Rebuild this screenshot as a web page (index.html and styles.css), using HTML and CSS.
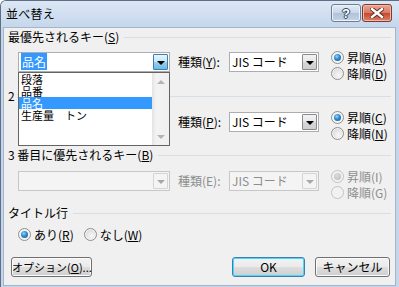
FILE: index.html
```html
<!DOCTYPE html>
<html lang="ja">
<head>
  <meta charset="UTF-8" />
  <title>並べ替え</title>
  <link rel="stylesheet" href="styles.css">
</head>
<body>
  <div class="window">
    <div class="titlebar">
      <span class="title">並べ替え</span>
      <div class="caption-buttons">
        <div class="cap-btn help">?</div>
        <div class="cap-btn close">
          <svg width="14" height="10" viewBox="0 0 14 10">
            <path d="M2 1 L12 9 M12 1 L2 9" stroke="#5b2a20" stroke-width="4.2" stroke-linecap="square"/>
            <path d="M2 1 L12 9 M12 1 L2 9" stroke="#fff" stroke-width="2.4" stroke-linecap="square"/>
          </svg>
        </div>
      </div>
    </div>

    <div class="client">
      <!-- 最優先されるキー -->
      <div class="group-head head-1"><span>最優先されるキー(<u>S</u>)</span><i class="rule"></i></div>
      <div class="key-row row-1">
        <div class="combo key-combo">
          <div class="combo-text"><span class="sel">品名</span></div>
          <div class="combo-btn hot"><b class="arrow"></b></div>
          <div class="droplist">
            <ul>
              <li>段落</li>
              <li>品番</li>
              <li class="selected">品名</li>
              <li>生産量　トン</li>
            </ul>
            <div class="scrollbar"><b class="up"></b><b class="down"></b></div>
          </div>
        </div>
        <span class="type-label">種類(<u>Y</u>):</span>
        <div class="combo type-combo">
          <div class="combo-text">JIS コード</div>
          <div class="combo-btn"><b class="arrow"></b></div>
        </div>
        <div class="order">
          <div class="radio checked"><i></i>昇順(<u>A</u>)</div>
          <div class="radio"><i></i>降順(<u>D</u>)</div>
        </div>
      </div>

      <!-- 2 番目 -->
      <div class="group-head head-2"><span>2 番目に優先されるキー(<u>T</u>)</span><i class="rule"></i></div>
      <div class="key-row row-2">
        <div class="combo key-combo">
          <div class="combo-text"></div>
          <div class="combo-btn"><b class="arrow"></b></div>
        </div>
        <span class="type-label">種類(<u>P</u>):</span>
        <div class="combo type-combo">
          <div class="combo-text">JIS コード</div>
          <div class="combo-btn"><b class="arrow"></b></div>
        </div>
        <div class="order">
          <div class="radio checked"><i></i>昇順(<u>C</u>)</div>
          <div class="radio"><i></i>降順(<u>N</u>)</div>
        </div>
      </div>

      <!-- 3 番目 (無効) -->
      <div class="group-head head-3"><span>3 番目に優先されるキー(<u>B</u>)</span><i class="rule"></i></div>
      <div class="key-row row-3 disabled">
        <div class="combo key-combo">
          <div class="combo-text"></div>
          <div class="combo-btn"><b class="arrow"></b></div>
        </div>
        <span class="type-label">種類(E):</span>
        <div class="combo type-combo">
          <div class="combo-text">JIS コード</div>
          <div class="combo-btn"><b class="arrow"></b></div>
        </div>
        <div class="order">
          <div class="radio checked"><i></i>昇順(I)</div>
          <div class="radio"><i></i>降順(G)</div>
        </div>
      </div>

      <!-- タイトル行 -->
      <div class="group-head head-4"><span>タイトル行</span><i class="rule"></i></div>
      <div class="title-opts">
        <div class="radio checked"><i></i>あり(<u>R</u>)</div>
        <div class="radio"><i></i>なし(<u>W</u>)</div>
      </div>

      <div class="buttons">
        <div class="btn btn-option">オプション(<u>O</u>)...</div>
        <div class="btn btn-ok default">OK</div>
        <div class="btn btn-cancel">キャンセル</div>
      </div>
    </div>
  </div>
</body>
</html>
```

FILE: styles.css
```css
* {
  box-sizing: border-box;
}
body {
  margin: 0;
  background: #fff;
  color: #000;
  font-family: "Noto Sans CJK JP", "Liberation Sans", sans-serif;
  font-size: 12px;
}
u {
  text-decoration: underline;
  text-underline-offset: 1px;
}

/* --- ウィンドウ枠 --- */
.window {
  width: 399px;
  height: 287px;
  background: #c5d6eb;
  border-top: 1px solid #5e6e84;
  border-left: 1px solid #5e6e84;
  border-top-left-radius: 6px;
  padding-bottom: 1px;
  display: flex;
  flex-direction: column;
  overflow: hidden;
}
.titlebar {
  height: 26px;
  flex-shrink: 0;
  display: flex;
  align-items: flex-start;
  background: linear-gradient(#dce7f5, #c6d7ec);
}
.title {
  padding: 6px 0 0 5px;
  line-height: 14px;
  letter-spacing: 0.02em;
}
.caption-buttons {
  margin: 3px 7px 0 auto;
  display: flex;
  gap: 1px;
}
.cap-btn {
  width: 30px;
  height: 18px;
  border-radius: 3px;
  display: flex;
  align-items: center;
  justify-content: center;
}
.help {
  border: 1px solid #6c7d95;
  background: linear-gradient(#e3ebf6 0%, #c8d7ea 48%, #b1c3da 52%, #c3d3e7 100%);
  box-shadow: inset 0 0 0 1px #eef3fa;
  color: #fff;
  font-family: "Liberation Sans", sans-serif;
  font-weight: bold;
  font-size: 13px;
  text-shadow: 0 0 1px #3a4a60, 0 0 1px #3a4a60, 1px 0 0 #3a4a60, -1px 0 0 #3a4a60, 0 1px 0 #3a4a60, 0 -1px 0 #3a4a60;
}
.close {
  border: 1px solid #7d3b2e;
  background: linear-gradient(#e9a696 0%, #d87a64 48%, #c6492f 52%, #d8826a 100%);
  box-shadow: inset 0 0 0 1px #f1b9ab;
}

/* --- クライアント領域 --- */
.client {
  height: 259px;
  margin: 0 3px 0 2px;
  border: 1px solid #a3b5cb;
  background: #f0f0f0;
  padding: 2px 4px 0 4px;
  display: flex;
  flex-direction: column;
}
.group-head {
  height: 14px;
  line-height: 14px;
  display: flex;
  align-items: center;
  white-space: nowrap;
}
.group-head .rule {
  flex: 1;
  height: 1px;
  background: #d5dfe5;
  margin-left: 5px;
}
.head-2 { margin-top: 8px; }
.head-3 { margin-top: 7px; }
.head-4 { margin-top: 6px; }

.key-row {
  height: 32px;
  margin-top: 6px;
  margin-left: 10px;
  display: flex;
  align-items: flex-start;
}
.row-1 { margin-top: 5px; }

/* コンボボックス */
.combo {
  position: relative;
  height: 20px;
  margin-top: 3px;
  border: 1px solid #abadb3;
  background: #fff;
  display: flex;
}
.key-combo { width: 152px; }
.type-combo { width: 90px; }
.combo-text {
  flex: 1;
  padding-left: 2px;
  line-height: 18px;
  white-space: nowrap;
  overflow: hidden;
}
.combo-text .sel {
  background: #3399ff;
  color: #fff;
  padding: 0 1px;
}
.combo-btn {
  width: 15px;
  margin: 1px 1px 1px 0;
  border: 1px solid #8a8a8a;
  border-radius: 1px;
  background: linear-gradient(#f3f3f3 0%, #e6e6e6 50%, #d6d6d6 51%, #cfcfcf 100%);
  display: flex;
  align-items: center;
  justify-content: center;
}
.combo-btn.hot {
  border-color: #3c7fb1;
  background: linear-gradient(#e8f5fc 0%, #c4e5f6 50%, #98d1ef 51%, #6fbae4 100%);
}
.arrow {
  width: 0;
  height: 0;
  border-left: 4px solid transparent;
  border-right: 4px solid transparent;
  border-top: 4px solid #000;
  margin-top: 1px;
}

/* ドロップダウンリスト */
.droplist {
  position: absolute;
  top: 19px;
  left: -1px;
  width: 152px;
  height: 74px;
  border: 1px solid #646464;
  background: #fff;
  z-index: 10;
  display: flex;
}
.droplist ul {
  flex: 1;
  margin: 0;
  padding: 0;
  list-style: none;
}
.droplist li {
  height: 12px;
  line-height: 12px;
  font-size: 11px;
  padding-left: 2px;
  white-space: nowrap;
}
.droplist li.selected {
  background: #3399ff;
  color: #fff;
}
.scrollbar {
  width: 17px;
  position: relative;
  background: linear-gradient(90deg, #e4e4e4 0%, #f3f3f3 25%, #f0f0f0 100%);
}
.scrollbar b {
  position: absolute;
  left: 5px;
  width: 0;
  height: 0;
  border-left: 4px solid transparent;
  border-right: 4px solid transparent;
}
.scrollbar .up {
  top: 7px;
  border-bottom: 4px solid #b4b4b4;
}
.scrollbar .down {
  bottom: 6px;
  border-top: 4px solid #b4b4b4;
}

.type-label {
  width: 51px;
  margin: 3px 0 0 8px;
  line-height: 20px;
  white-space: nowrap;
}
.order {
  margin-left: 12px;
  display: flex;
  flex-direction: column;
}

/* ラジオボタン */
.radio {
  height: 16px;
  display: flex;
  align-items: center;
  white-space: nowrap;
}
.radio i {
  position: relative;
  width: 13px;
  height: 13px;
  margin-right: 3px;
  border-radius: 50%;
  border: 1px solid #8e8f8f;
  background: radial-gradient(circle at 60% 65%, #f8f8f8 0%, #e2e2e2 55%, #cfcfcf 100%);
  box-shadow: inset 0 0 0 1px #f4f4f4;
}
.radio.checked i {
  background: #f4f4f4;
}
.radio.checked i::after {
  content: '';
  position: absolute;
  left: 2px;
  top: 2px;
  width: 7px;
  height: 7px;
  border-radius: 50%;
  background: radial-gradient(circle at 40% 35%, #8fd8fa 0%, #2d8ad0 45%, #17518d 100%);
}

/* 無効な行 */
.disabled {
  color: #8d8d8d;
}
.disabled .combo {
  border-color: #c7c7c7;
  background: #f4f4f4;
}
.disabled .combo-btn {
  border-color: #d4d4d4;
  background: #f4f4f4;
}
.disabled .arrow {
  border-top-color: #a8a8a8;
}
.disabled .radio i {
  border-color: #c2c2c2;
  background: #f1f1f1;
}
.disabled .radio.checked i::after {
  background: radial-gradient(circle at 40% 35%, #dcdcdc 0%, #b9b9b9 100%);
}

.title-opts {
  height: 16px;
  margin: 6px 0 0 10px;
  display: flex;
  gap: 10px;
}

/* ボタン */
.buttons {
  margin-top: 15px;
  display: flex;
  padding-right: 1px;
}
.btn {
  height: 20px;
  border: 1px solid #707070;
  border-radius: 3px;
  background: linear-gradient(#f2f2f2 0%, #ebebeb 48%, #dddddd 52%, #cfcfcf 100%);
  box-shadow: inset 0 0 0 1px #fbfbfb;
  line-height: 18px;
  text-align: center;
  white-space: nowrap;
}
.btn-option {
  width: 81px;
  margin-left: 3px;
  font-size: 11px;
}
.btn-ok {
  width: 73px;
  margin-left: auto;
}
.btn-cancel {
  width: 75px;
  margin-left: 10px;
}
.btn.default {
  border-color: #3c7fb1;
  box-shadow: inset 0 0 0 1px #48d8fb;
}
```
